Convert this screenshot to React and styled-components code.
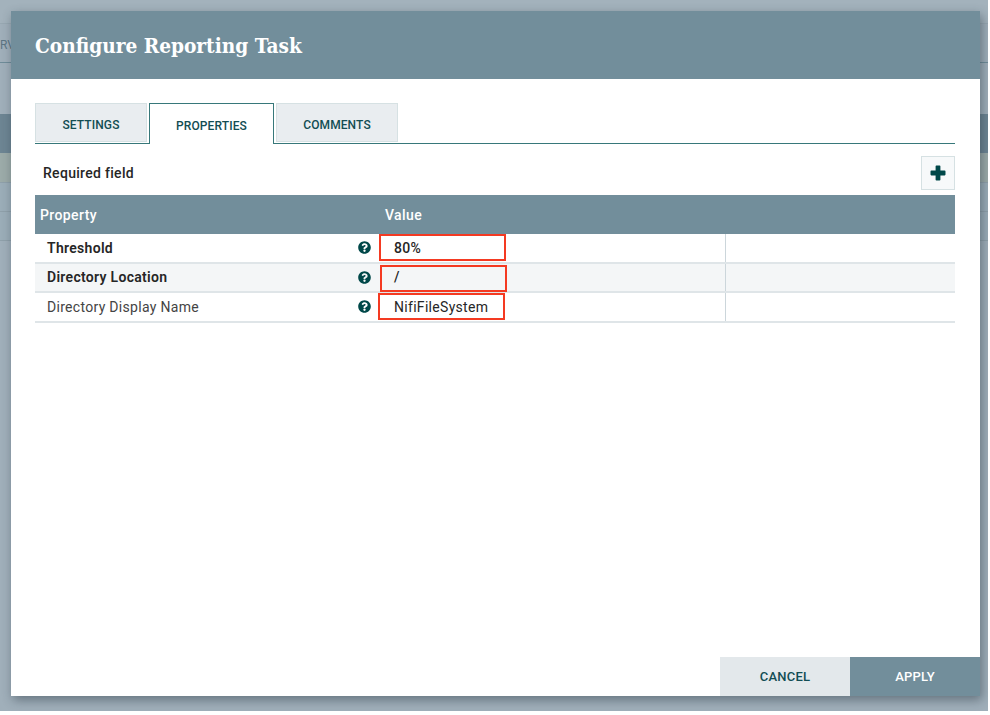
import React from 'react';
import styled, { createGlobalStyle } from 'styled-components';
import { FaQuestionCircle } from 'react-icons/fa';

const GlobalStyle = createGlobalStyle`
  html, body {
    margin: 0;
    padding: 0;
    background: #fff;
  }
`;

const Screen = styled.div`
  position: relative;
  width: 988px;
  height: 711px;
  overflow: hidden;
  background: #a0afba;
  font-family: Roboto, "Liberation Sans", sans-serif;
`;

const BackdropPage = styled.div`
  display: flex;
  flex-direction: column;
`;

const BackdropBand = styled.div`
  height: ${({ h }) => h}px;
  background: ${({ bg }) => bg};
  border-bottom: ${({ line }) => (line ? `1px solid ${line}` : '0')};
`;

const BackdropTab = styled.span`
  position: absolute;
  left: 0;
  top: 38px;
  font-size: 12px;
  color: #5c7583;
`;

const Dialog = styled.div`
  position: absolute;
  left: 11px;
  top: 11px;
  width: 969px;
  height: 685px;
  display: flex;
  flex-direction: column;
  background: #fff;
  box-shadow: 2px 4px 10px rgba(30, 45, 55, 0.45);
`;

const DialogHeader = styled.div`
  height: 68px;
  flex-shrink: 0;
  box-sizing: border-box;
  padding: 2px 0 0 24px;
  display: flex;
  align-items: center;
  background: #728e9b;
  color: #fff;
  font-family: "DejaVu Serif Condensed", "DejaVu Serif", "Liberation Serif", serif;
  font-size: 20.65px;
  font-weight: 700;
`;

const DialogBody = styled.div`
  flex: 1;
  padding: 24px 25px 0 24px;
`;

const TabBar = styled.div`
  display: flex;
  gap: 2px;
  height: 40px;
  border-bottom: 1px solid #37787a;
`;

const Tab = styled.div`
  width: ${({ w }) => w}px;
  height: ${({ active }) => (active ? 41 : 39)}px;
  box-sizing: border-box;
  padding-top: ${({ active }) => (active ? 3 : 4)}px;
  display: flex;
  align-items: center;
  justify-content: center;
  font-size: 12px;
  font-weight: 500;
  letter-spacing: 0.1px;
  color: #124d53;
  background: ${({ active }) => (active ? '#fff' : '#e9edf0')};
  border: ${({ active }) => (active ? '1px solid #37787a' : '1px solid #d6e1e3')};
  border-bottom: ${({ active }) => (active ? '0' : '1px solid #d6e1e3')};
  z-index: ${({ active }) => (active ? 1 : 0)};
`;

const Toolbar = styled.div`
  display: flex;
  align-items: center;
  justify-content: space-between;
  height: 51px;
  padding-left: 8px;
`;

const RequiredLabel = styled.div`
  margin-top: 7px;
  font-size: 14px;
  font-weight: 500;
  letter-spacing: 0.3px;
  color: #262626;
`;

const AddButton = styled.div`
  width: 34px;
  height: 34px;
  box-sizing: border-box;
  display: flex;
  align-items: center;
  justify-content: center;
  background: #f7f9fa;
  border: 1px solid #d6e1e3;
  color: #004849;
  margin-top: 7px;
`;

const Grid = styled.div`
  display: flex;
  flex-direction: column;
`;

const GridHead = styled.div`
  display: flex;
  align-items: center;
  height: 39px;
  background: #728e9b;
  color: #fff;
  font-size: 14px;
  font-weight: 500;
  letter-spacing: 0.4px;
`;

const HeadCell = styled.div`
  width: ${({ w }) => w}px;
  padding-left: ${({ pad }) => pad}px;
  box-sizing: border-box;
`;

const GridRow = styled.div`
  display: flex;
  align-items: center;
  height: 29.5px;
  box-sizing: border-box;
  background: ${({ alt }) => (alt ? '#f4f6f7' : '#fff')};
  border-bottom: 2px solid #dfe5e8;
`;

const PropertyCell = styled.div`
  width: 344px;
  box-sizing: border-box;
  padding: 0 8px 0 12px;
  display: flex;
  align-items: center;
  justify-content: space-between;
  font-size: 14px;
  letter-spacing: 0.3px;
  font-weight: ${({ required }) => (required ? 600 : 400)};
  color: ${({ required }) => (required ? '#262626' : '#444')};
`;

const HelpIcon = styled(FaQuestionCircle)`
  color: #004849;
  font-size: 13px;
`;

const ValueCell = styled.div`
  position: relative;
  width: 347px;
  height: 100%;
  box-sizing: border-box;
  padding-left: 15px;
  display: flex;
  align-items: center;
  border-right: 1px solid #ccd6db;
  font-size: 14px;
  letter-spacing: 0.3px;
  font-weight: ${({ required }) => (required ? 500 : 400)};
  color: #262626;
`;

const Highlight = styled.div`
  position: absolute;
  left: ${({ dx }) => dx}px;
  top: ${({ dy }) => dy}px;
  width: 127px;
  height: 27px;
  box-sizing: border-box;
  border: 2px solid #f43a22;
`;

const Footer = styled.div`
  display: flex;
  justify-content: flex-end;
`;

const FooterButton = styled.div`
  width: 130px;
  height: 39px;
  display: flex;
  align-items: center;
  justify-content: center;
  font-size: 13px;
  font-weight: 500;
  letter-spacing: 0.2px;
  background: ${({ primary }) => (primary ? '#728e9b' : '#e3e8eb')};
  color: ${({ primary }) => (primary ? '#fff' : '#124d53')};
`;

const PlusIcon = () => (
  <svg width="16" height="16" viewBox="0 0 16 16" fill="currentColor">
    <path d="M6.4 0.5h3.2a0.8 0.8 0 0 1 0.8 0.8v4.3h4.3a0.8 0.8 0 0 1 0.8 0.8v3.2a0.8 0.8 0 0 1-0.8 0.8h-4.3v4.3a0.8 0.8 0 0 1-0.8 0.8H6.4a0.8 0.8 0 0 1-0.8-0.8v-4.3H1.3a0.8 0.8 0 0 1-0.8-0.8V6.4a0.8 0.8 0 0 1 0.8-0.8h4.3V1.3a0.8 0.8 0 0 1 0.8-0.8z" />
  </svg>
);

const rows = [
  { name: 'Threshold', value: '80%', required: true, dx: 0, dy: 0 },
  { name: 'Directory Location', value: '/', required: true, alt: true, dx: 1, dy: 1 },
  { name: 'Directory Display Name', value: 'NifiFileSystem', dx: -1, dy: 0 },
];

const App = () => (
  <>
    <GlobalStyle />
    <Screen>
      <BackdropPage>
        <BackdropBand h={23} bg="#a3b2bc" line="#98a8b2" />
        <BackdropBand h={38} bg="#a0afba" line="#6f8c99" />
        <BackdropBand h={51} bg="#a0afba" />
        <BackdropBand h={39} bg="#6d8593" />
        <BackdropBand h={29} bg="#9caba9" line="#8fa0aa" />
        <BackdropBand h={28} bg="#9badb8" line="#8fa0aa" />
        <BackdropBand h={28} bg="#9badb8" line="#8fa0aa" />
      </BackdropPage>
      <BackdropTab>RV</BackdropTab>
      <Dialog>
        <DialogHeader>Configure Reporting Task</DialogHeader>
        <DialogBody>
          <TabBar>
            <Tab w={112}>SETTINGS</Tab>
            <Tab w={125} active>PROPERTIES</Tab>
            <Tab w={122}>COMMENTS</Tab>
          </TabBar>
          <Toolbar>
            <RequiredLabel>Required field</RequiredLabel>
            <AddButton><PlusIcon /></AddButton>
          </Toolbar>
          <Grid>
            <GridHead>
              <HeadCell w={344} pad={5}>Property</HeadCell>
              <HeadCell w={347} pad={6}>Value</HeadCell>
            </GridHead>
            {rows.map((row) => (
              <GridRow key={row.name} alt={row.alt}>
                <PropertyCell required={row.required}>
                  {row.name}
                  <HelpIcon />
                </PropertyCell>
                <ValueCell required={row.required}>
                  <Highlight dx={row.dx} dy={row.dy} />
                  {row.value}
                </ValueCell>
              </GridRow>
            ))}
          </Grid>
        </DialogBody>
        <Footer>
          <FooterButton>CANCEL</FooterButton>
          <FooterButton primary>APPLY</FooterButton>
        </Footer>
      </Dialog>
    </Screen>
  </>
);

export default App;
